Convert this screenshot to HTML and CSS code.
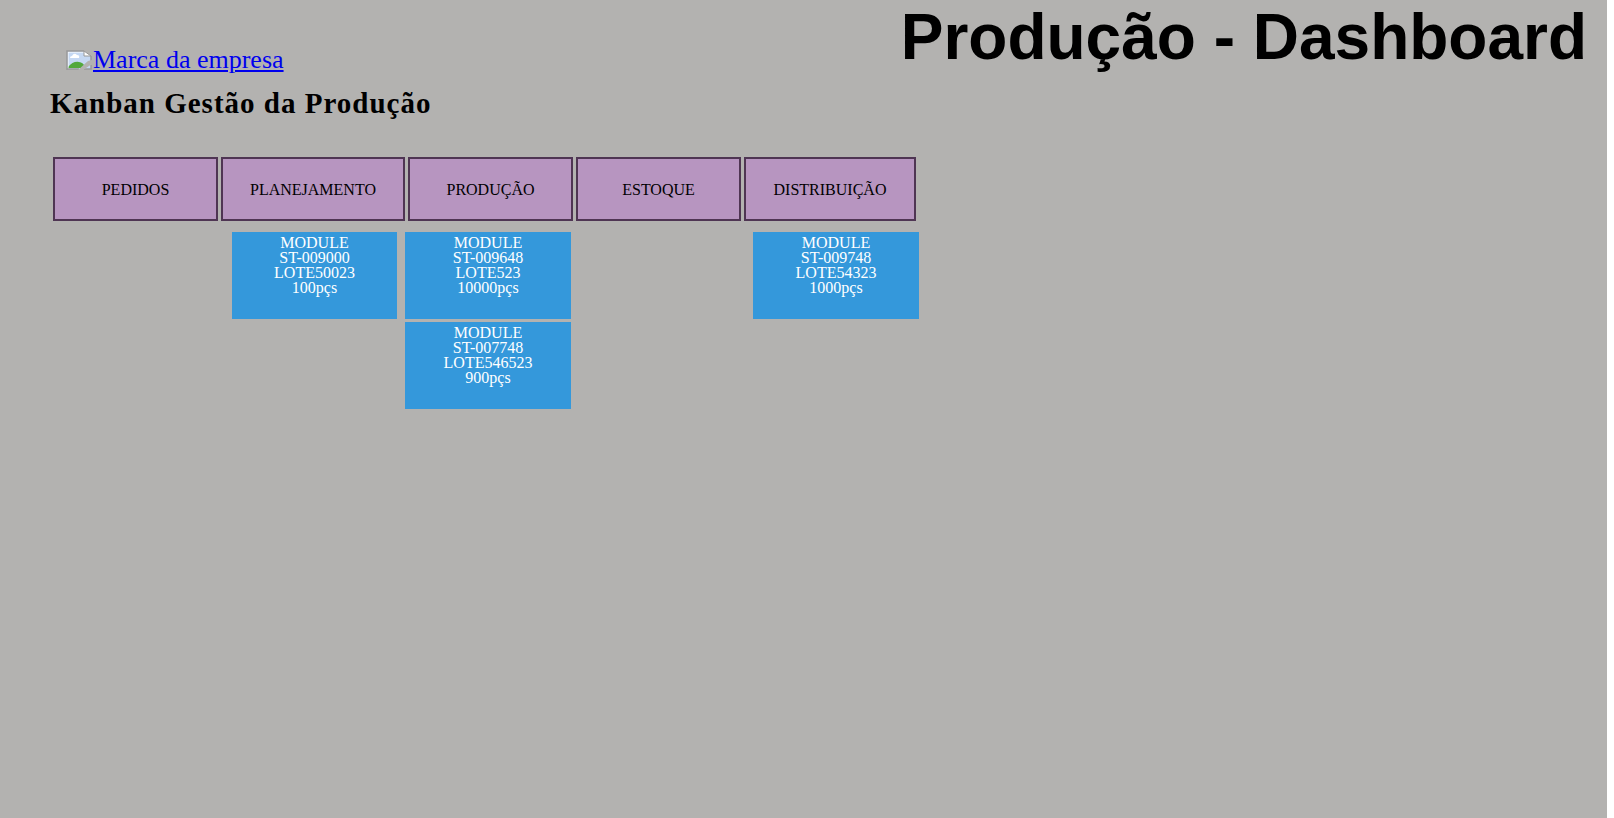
FILE: index.html
```html
<!DOCTYPE html>
<html lang="pt-BR">
<head>
<meta charset="utf-8">
<title>Produção - Dashboard</title>
<link rel="stylesheet" href="styles.css">
</head>
<body>
<div class="page">
  <header class="top">
    <a class="brand" href="#">
      <svg class="brand-icon" viewBox="0 0 26 20" preserveAspectRatio="none" aria-hidden="true">
        <path d="M1 1H18L25 6V19H1Z" fill="#c5d8f3"/>
        <path d="M4 8Q4 6 6 6Q8 2 11 5Q14 5 13 8Z" fill="#fff"/>
        <path d="M2 18V17Q7 11 13 12Q17 12 20 18Z" fill="#52a83c"/>
        <path d="M2 19V2H18" fill="none" stroke="#fff"/>
        <path d="M1 20V1H18M1 19H13M25 6V11M18 19H25V15" fill="none" stroke="#999" stroke-width="1.5"/>
        <path d="M18 1V6H25Z" fill="#fff" stroke="#999"/>
        <path d="M26 10L22 11L12 20H17L26 14Z" fill="#b3b2b0"/>
      </svg><span class="brand-text">Marca da empresa</span>
    </a>
    <h1 class="title">Produção - Dashboard</h1>
  </header>
  <main class="board">
    <h2 class="heading">Kanban Gestão da Produção</h2>
    <div class="stages">
      <div class="stage">PEDIDOS</div>
      <div class="stage">PLANEJAMENTO</div>
      <div class="stage">PRODUÇÃO</div>
      <div class="stage">ESTOQUE</div>
      <div class="stage">DISTRIBUIÇÃO</div>
    </div>
    <div class="lanes">
      <div class="lane"></div>
      <div class="lane">
        <div class="card">MODULE<br>ST-009000<br>LOTE50023<br>100pçs</div>
      </div>
      <div class="lane">
        <div class="card">MODULE<br>ST-009648<br>LOTE523<br>10000pçs</div>
        <div class="card">MODULE<br>ST-007748<br>LOTE546523<br>900pçs</div>
      </div>
      <div class="lane"></div>
      <div class="lane">
        <div class="card">MODULE<br>ST-009748<br>LOTE54323<br>1000pçs</div>
      </div>
    </div>
  </main>
</div>
</body>
</html>
```
FILE: styles.css
```css
* { box-sizing: border-box; }

html { background: #fff; }

body {
  margin: 0 7px 0 0;
  font-family: "Liberation Serif", "Times New Roman", serif;
  font-size: 16px;
  line-height: 15px;
  color: #000;
}

.page {
  min-height: 100vh;
  background: #b3b2b0;
}

.top {
  display: flex;
  justify-content: space-between;
  align-items: flex-start;
  padding: 0 20px 0 66px;
}

.brand {
  display: flex;
  align-items: center;
  gap: 1px;
  margin-top: 46px;
  color: #00e;
  font-size: 26px;
  line-height: 28px;
  text-decoration: none;
}

.brand-icon { width: 26px; height: 20px; }

.brand-text { text-decoration: underline; }

.title {
  margin: 0;
  font-family: "Liberation Sans", Arial, sans-serif;
  font-size: 64px;
  line-height: 74px;
  white-space: nowrap;
}

.board { padding: 16px 50px 0; }

.heading {
  margin: 0 0 41px;
  font-size: 29px;
  line-height: 26px;
  letter-spacing: 1px;
}

.stages {
  display: grid;
  grid-template-columns: 165px 184px 165px 165px 172px;
  gap: 3px;
  padding-left: 3px;
}

.stage {
  display: flex;
  align-items: center;
  justify-content: center;
  height: 64px;
  border: 2px solid #4f3553;
  background: #b795c0;
}

.lanes {
  display: grid;
  grid-template-columns: 171px 165px 166px 166px 166px;
  gap: 8px;
  margin-top: 11px;
  padding-left: 3px;
}

.lane {
  display: flex;
  flex-direction: column;
  gap: 3px;
}

.card {
  min-height: 87px;
  padding-top: 3px;
  background: #3498db;
  color: #fff;
  text-align: center;
}
```
